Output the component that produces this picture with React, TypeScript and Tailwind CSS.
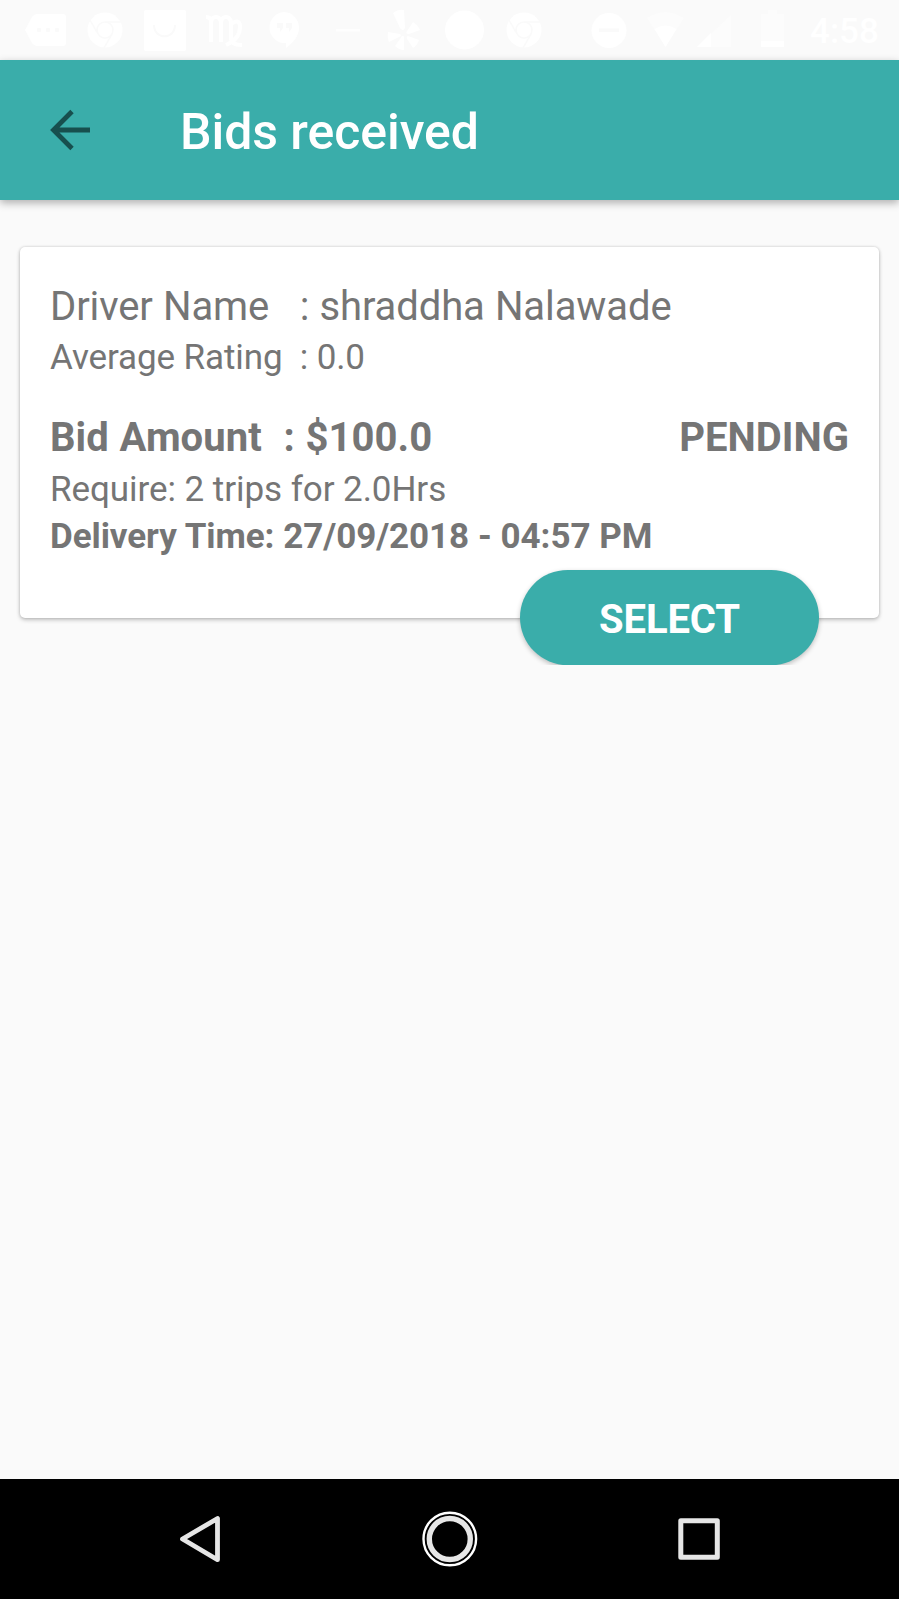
import type { ReactNode } from "react";

function StatusIcon({ width = 60, children }: { width?: number; children: ReactNode }) {
  return (
    <svg width={width} height={60} viewBox={`0 0 ${width} 60`} fill="#fff" className="shrink-0">
      {children}
    </svg>
  );
}

function Chrome() {
  return (
    <g>
      <circle cx="30" cy="30" r="17.5" />
      <g fill="none" stroke="#fafafa" strokeWidth="1.5">
        <circle cx="30" cy="30" r="8" />
        <path d="M30 22h17M23 34L15 20M37 34l-8 14" />
      </g>
    </g>
  );
}

function StatusBar() {
  return (
    <div className="flex h-[60px] shrink-0 bg-[#fafafa] pl-[15px]">
      <StatusIcon>
        <path d="M22 14h26q3 0 3 3v26q0 3-3 3H22q-3 0-5-3l-7-13 7-13q2-3 5-3z" />
        <g fill="#fafafa">
          <circle cx="24" cy="30" r="2.3" />
          <circle cx="33" cy="30" r="2.3" />
          <circle cx="42" cy="30" r="2.3" />
        </g>
      </StatusIcon>
      <StatusIcon>
        <Chrome />
      </StatusIcon>
      <StatusIcon>
        <rect x="9" y="10" width="42" height="41" rx="2" />
        <path d="M19 25c0 15 21 15 21 0" fill="none" stroke="#fafafa" strokeWidth="2" />
      </StatusIcon>
      <StatusIcon>
        <path
          d="M11 17q5 0 5 5v20M16 22q1-5 5-5t5 5v20M26 22q1-5 5-5t5 5v16q0 7 11 7M36 24q9-6 9 3 0 12-14 18"
          fill="none"
          stroke="#fff"
          strokeWidth="4"
        />
      </StatusIcon>
      <StatusIcon>
        <path d="M29 12a15.5 15.5 0 0 1 15 16c0 8-6 15-13 20v-5A15.5 15.5 0 1 1 29 12z" />
        <path d="M22 23h6v5l-3 4v-4h-3zM31 23h6v5l-3 4v-4h-3z" fill="#fafafa" />
      </StatusIcon>
      <StatusIcon>
        <rect x="21" y="29" width="24" height="2.5" opacity=".7" />
      </StatusIcon>
      <StatusIcon>
        <path d="M18 13q5-4 11-3l1 18q-2 4-5 0zM13 32l12 2q2 2-1 3l-10 5q-2-4-1-10zM27 36q2-1 2 2v12q-5 0-9-4zM33 36l11 4q-2 6-6 8l-6-9q-1-3 1-3zM32 31l6-9q5 3 7 8l-11 4q-4 0-2-3z" />
      </StatusIcon>
      <StatusIcon>
        <circle cx="29.5" cy="30" r="19.5" />
      </StatusIcon>
      <StatusIcon>
        <g transform="translate(-1 0)">
          <Chrome />
        </g>
      </StatusIcon>
      <div className="flex pl-[25px]">
        <StatusIcon width={56}>
          <circle cx="29" cy="30.5" r="17.5" />
          <rect x="19" y="28.5" width="20" height="3.5" fill="#fafafa" />
        </StatusIcon>
        <StatusIcon width={56}>
          <path d="M11 18q18-12 37 0L29.500 47z" opacity=".4" />
          <path d="M18.500 29q11-7 22 0l-11 18z" />
        </StatusIcon>
        <StatusIcon width={56}>
          <path d="M39 15v32H5z" opacity=".4" />
          <path d="M19 33v14H5z" />
        </StatusIcon>
        <StatusIcon width={56}>
          <path d="M13 14h7v-4h9v4h7v33H13z" opacity=".4" />
          <rect x="13" y="41" width="23" height="6" />
        </StatusIcon>
      </div>
      <span className="pl-[6px] text-[35px] leading-[63px] font-medium text-white">4:58</span>
    </div>
  );
}

function AppBar() {
  return (
    <header className="relative flex h-[140px] shrink-0 items-center bg-[#3aadaa] pl-[50px] shadow-[0_3px_8px_rgba(0,0,0,0.3)]">
      <button aria-label="Back" className="w-[130px]">
        <svg width="42" height="42" viewBox="0 0 42 42" fill="none" stroke="#174f4e" strokeWidth="4.800">
          <path d="M40 21H4M22 2.500L3.500 21 22 39.500" />
        </svg>
      </button>
      <h1 className="pt-1 text-[50px] leading-[58px] font-medium tracking-[-0.06px] whitespace-nowrap text-white">
        Bids received
      </h1>
    </header>
  );
}

function BidCard() {
  return (
    <section className="mx-[20px] mt-[47px]">
      <div className="h-[371px] rounded-[5px] bg-white px-[30px] pt-[36px] whitespace-pre text-[#757575] shadow-[0_2px_4px_rgba(0,0,0,0.22),0_0_3px_rgba(0,0,0,0.16)]">
        <p className="text-[40px] leading-[47px] tracking-[-0.1px] [word-spacing:0.35px]">
          {"Driver Name   : shraddha Nalawade"}
        </p>
        <p className="mt-[7px] text-[35px] leading-[41px] tracking-[-0.1px]">{"Average Rating  : 0.0"}</p>
        <div className="mt-[36px] flex justify-between text-[40px] leading-[47px] font-bold">
          <p className="tracking-[0.06px] [word-spacing:0.8px]">{"Bid Amount  : $100.0"}</p>
          <p>PENDING</p>
        </div>
        <p className="mt-[8px] text-[35px] leading-[41px] tracking-[-0.06px]">Require: 2 trips for 2.0Hrs</p>
        <p className="mt-[6px] text-[35px] leading-[41px] font-bold tracking-[-0.08px] [word-spacing:0.3px]">
          Delivery Time: 27/09/2018 - 04:57 PM
        </p>
      </div>
      <div className="relative -mt-[58px] flex justify-end overflow-hidden pt-[10px] pr-[60px]">
        <button className="h-[95px] w-[299px] rounded-full bg-[#3aadaa] pt-[3px] text-[40px] leading-[47px] font-bold tracking-[-0.1px] text-white shadow-[0_2px_5px_rgba(0,0,0,0.24)]">
          SELECT
        </button>
      </div>
    </section>
  );
}

function NavigationBar() {
  return (
    <nav className="flex h-[120px] shrink-0 items-center justify-between bg-black pr-[179px] pl-[179px]">
      <svg width="42" height="60" viewBox="0 0 42 60" fill="none" stroke="#e6e6e6" strokeWidth="4.800" strokeLinejoin="round">
        <path d="M38.500 9.500v41.200L3.500 30z" />
      </svg>
      <svg width="56" height="60" viewBox="0 0 56 60" fill="none">
        <circle cx="27.800" cy="30" r="26.300" stroke="#fff" strokeWidth="2.400" />
        <circle cx="27.800" cy="30" r="20.500" stroke="#e6e6e6" strokeWidth="5.400" />
      </svg>
      <svg width="42" height="60" viewBox="0 0 42 60" fill="none" stroke="#e6e6e6" strokeWidth="5" strokeLinejoin="round">
        <rect x="2.800" y="11.700" width="36.500" height="36.500" />
      </svg>
    </nav>
  );
}

export default function App() {
  return (
    <div className="flex h-[1599px] w-[899px] flex-col overflow-hidden bg-[#fafafa] font-[Roboto,sans-serif]">
      <StatusBar />
      <AppBar />
      <main className="flex-1">
        <BidCard />
      </main>
      <NavigationBar />
    </div>
  );
}
